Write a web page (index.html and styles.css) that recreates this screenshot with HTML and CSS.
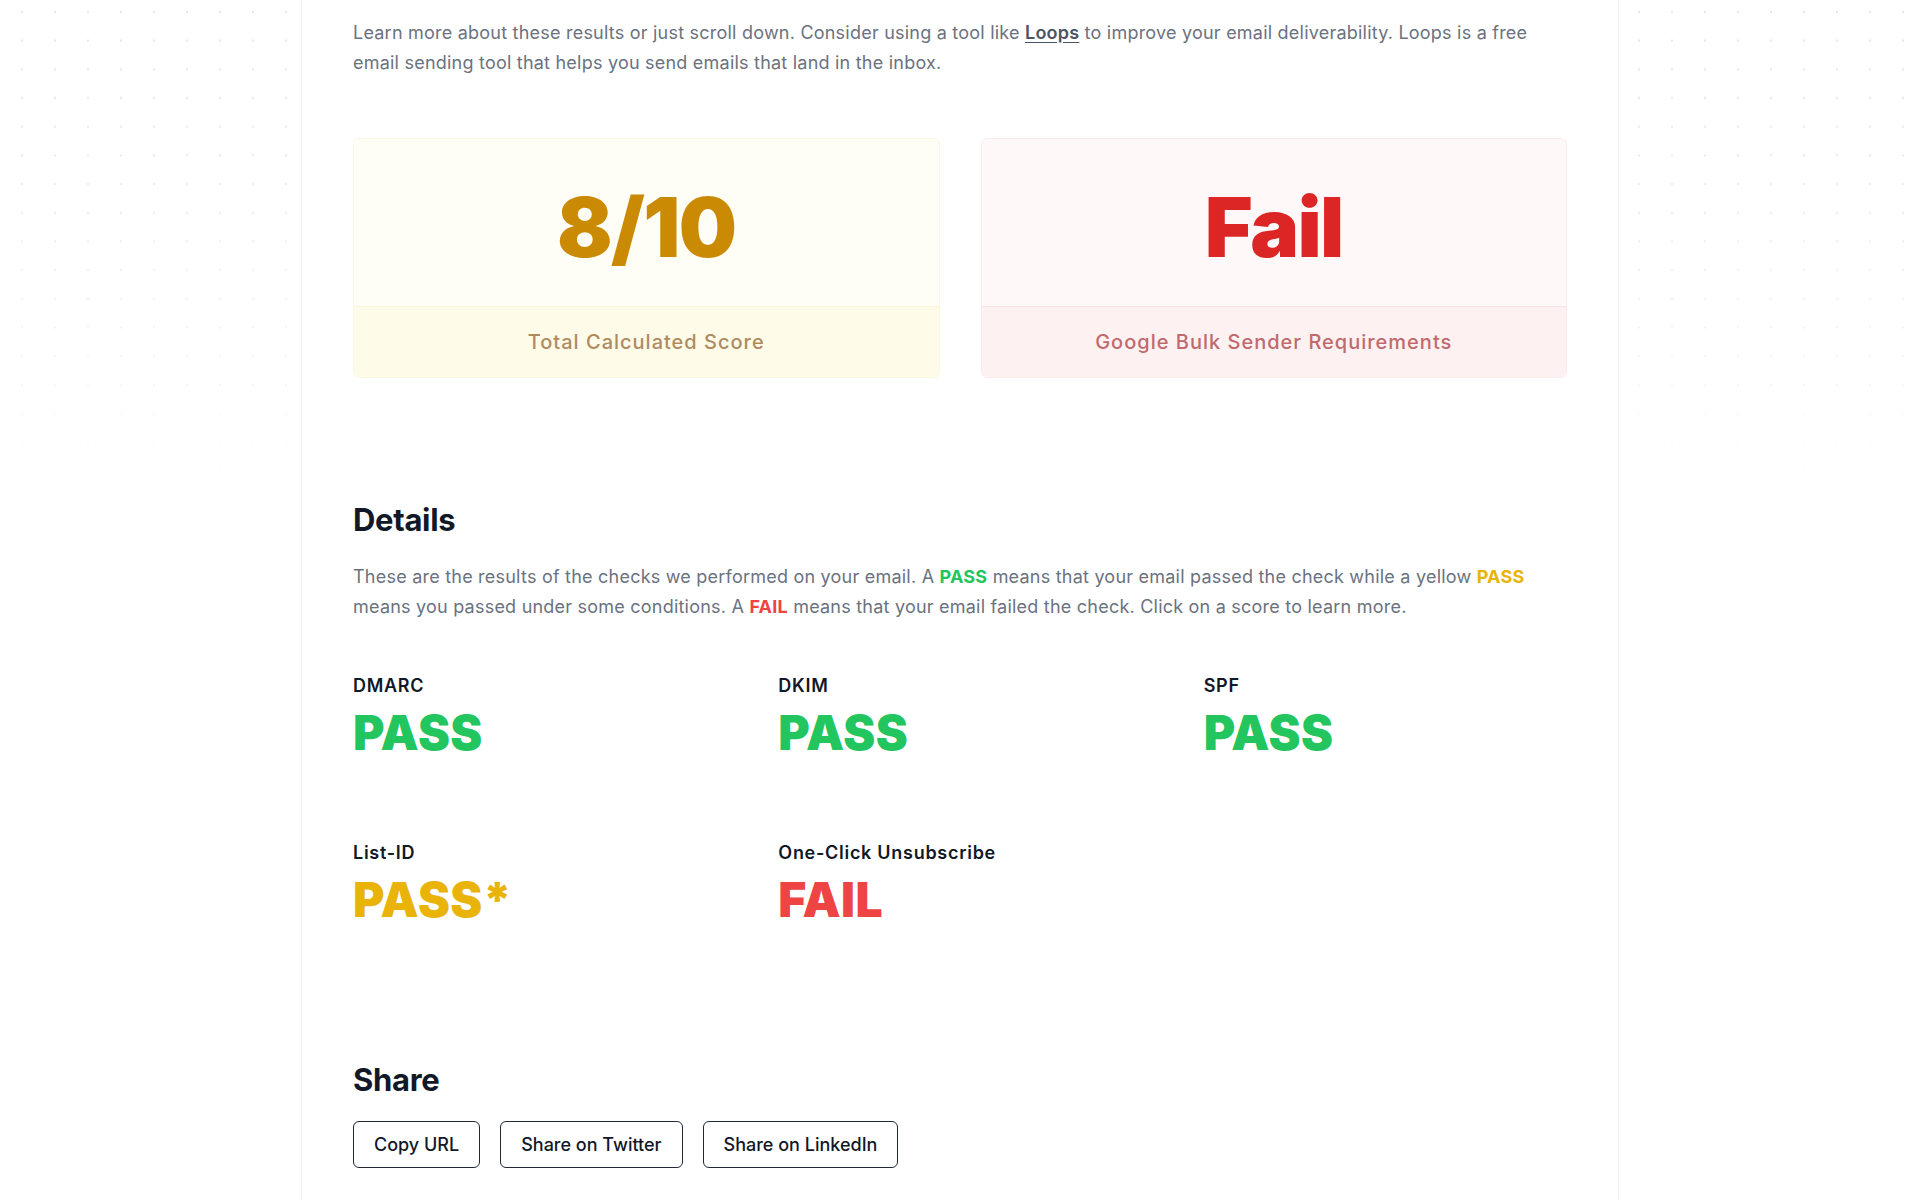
FILE: index.html
```html
<!DOCTYPE html>
<html lang="en">
<head>
<meta charset="utf-8">
<title>Email deliverability results</title>
<link rel="stylesheet" href="styles.css">
</head>
<body>
<main class="page">
  <p class="lead">Learn more about these results or just scroll down. Consider using a tool like <a class="link" href="#">Loops</a> to improve your email deliverability. Loops is a free email sending tool that helps you send emails that land in the inbox.</p>

  <section class="scores">
    <div class="score-card score-card--yellow">
      <div class="score-main"><span class="score-value">8/10</span></div>
      <div class="score-label">Total Calculated Score</div>
    </div>
    <div class="score-card score-card--red">
      <div class="score-main"><span class="score-value">Fail</span></div>
      <div class="score-label">Google Bulk Sender Requirements</div>
    </div>
  </section>

  <section class="details">
    <h2 class="heading">Details</h2>
    <p class="text">These are the results of the checks we performed on your email. A <b class="t-green">PASS</b> means that your email passed the check while a yellow <b class="t-yellow">PASS</b> means you passed under some conditions. A <b class="t-red">FAIL</b> means that your email failed the check. Click on a score to learn more.</p>

    <div class="checks">
      <div class="check">
        <div class="check-name">DMARC</div>
        <div class="check-result green">PASS</div>
      </div>
      <div class="check">
        <div class="check-name">DKIM</div>
        <div class="check-result green">PASS</div>
      </div>
      <div class="check">
        <div class="check-name">SPF</div>
        <div class="check-result green">PASS</div>
      </div>
      <div class="check">
        <div class="check-name">List-ID</div>
        <div class="check-result yellow">PASS*</div>
      </div>
      <div class="check">
        <div class="check-name">One-Click Unsubscribe</div>
        <div class="check-result red">FAIL</div>
      </div>
    </div>
  </section>

  <section class="share">
    <h2 class="heading">Share</h2>
    <div class="buttons">
      <button class="btn" type="button">Copy URL</button>
      <button class="btn" type="button">Share on Twitter</button>
      <button class="btn" type="button">Share on LinkedIn</button>
    </div>
  </section>
</main>
</body>
</html>
```

FILE: styles.css
```css
* { box-sizing: border-box; }

html, body {
  margin: 0;
  padding: 0;
  background: #ffffff;
}

body {
  font-family: Inter, "Noto Sans", "Liberation Sans", sans-serif;
  color: #111827;
  position: relative;
  min-height: 1200px;
  overflow: hidden;
}

body::before {
  content: "";
  position: absolute;
  top: 0;
  left: 0;
  right: 0;
  height: 520px;
  background-image: radial-gradient(circle at 16px 14px, #e2e2e2 0, #e2e2e2 0.9px, rgba(255,255,255,0) 1.6px);
  background-size: 33px 28.7px;
  background-position: 6px -2px;
  -webkit-mask-image: linear-gradient(to bottom, rgba(0,0,0,0.85) 0%, rgba(0,0,0,0.5) 50%, rgba(0,0,0,0) 100%);
  mask-image: linear-gradient(to bottom, rgba(0,0,0,0.85) 0%, rgba(0,0,0,0.5) 50%, rgba(0,0,0,0) 100%);
  z-index: 0;
}

.page {
  position: relative;
  z-index: 1;
  width: 1318px;
  margin: 0 auto;
  min-height: 1200px;
  background: #ffffff;
  border-left: 1px solid #f1f1f3;
  border-right: 1px solid #f1f1f3;
  padding: 18px 51px 40px;
}

.lead,
.text {
  margin: 0;
  font-size: 18px;
  line-height: 30px;
  color: #6b7280;
  letter-spacing: 0.22px;
}

.link {
  color: #4b5563;
  font-weight: 600;
  text-decoration: underline;
  text-underline-offset: 3px;
}

.scores {
  display: grid;
  grid-template-columns: 1fr 1fr;
  gap: 41px;
  margin-top: 60px;
}

.score-card {
  border-radius: 6px;
  overflow: hidden;
  display: flex;
  flex-direction: column;
  height: 240px;
}

.score-main {
  height: 167px;
  display: flex;
  align-items: center;
  justify-content: center;
  padding-top: 10px;
}

.score-value {
  font-size: 82px;
  font-weight: 900;
  line-height: 1;
  letter-spacing: -0.02em;
}

.score-label {
  flex: 1;
  display: flex;
  align-items: center;
  justify-content: center;
  font-size: 20px;
  font-weight: 500;
  letter-spacing: 0.05em;
}

.score-card--yellow {
  background: #fffef6;
  border: 1px solid #fcf8df;
}
.score-card--yellow .score-value { color: #ca8a04; }
.score-card--yellow .score-label {
  background: #fefce9;
  border-top: 1px solid #fbf6d9;
  color: #b08a5f;
}

.score-card--red {
  background: #fff8f8;
  border: 1px solid #fbecec;
}
.score-card--red .score-value { color: #dc2626; }
.score-card--red .score-label {
  background: #fef1f2;
  border-top: 1px solid #fbe6e7;
  color: #c06a6d;
}

.details {
  margin-top: 124px;
}

.heading {
  margin: 0;
  font-size: 31px;
  line-height: 36px;
  font-weight: 700;
  color: #111827;
  letter-spacing: -0.01em;
}

.details .text {
  margin-top: 24px;
}

.t-green { color: #22c55e; font-weight: 700; }
.t-yellow { color: #eab308; font-weight: 700; }
.t-red { color: #ef4444; font-weight: 700; }

.checks {
  display: grid;
  grid-template-columns: repeat(3, 1fr);
  column-gap: 62px;
  row-gap: 82px;
  margin-top: 50px;
}

.check-name {
  font-size: 18px;
  line-height: 28px;
  font-weight: 600;
  letter-spacing: 0.04em;
  color: #111827;
}

.check-result {
  margin-top: 9px;
  font-size: 48px;
  line-height: 48px;
  font-weight: 900;
  letter-spacing: 0.01em;
}

.check-result.green { color: #22c55e; }
.check-result.yellow { color: #eab308; }
.check-result.red { color: #ef4444; }

.share {
  margin-top: 138px;
}

.buttons {
  display: flex;
  gap: 20px;
  margin-top: 23px;
}

.btn {
  height: 47px;
  padding: 0 20px;
  background: #ffffff;
  border: 1.5px solid #1f2937;
  border-radius: 6px;
  font-family: Inter, "Noto Sans", "Liberation Sans", sans-serif;
  font-size: 18px;
  font-weight: 500;
  color: #111827;
}
```
